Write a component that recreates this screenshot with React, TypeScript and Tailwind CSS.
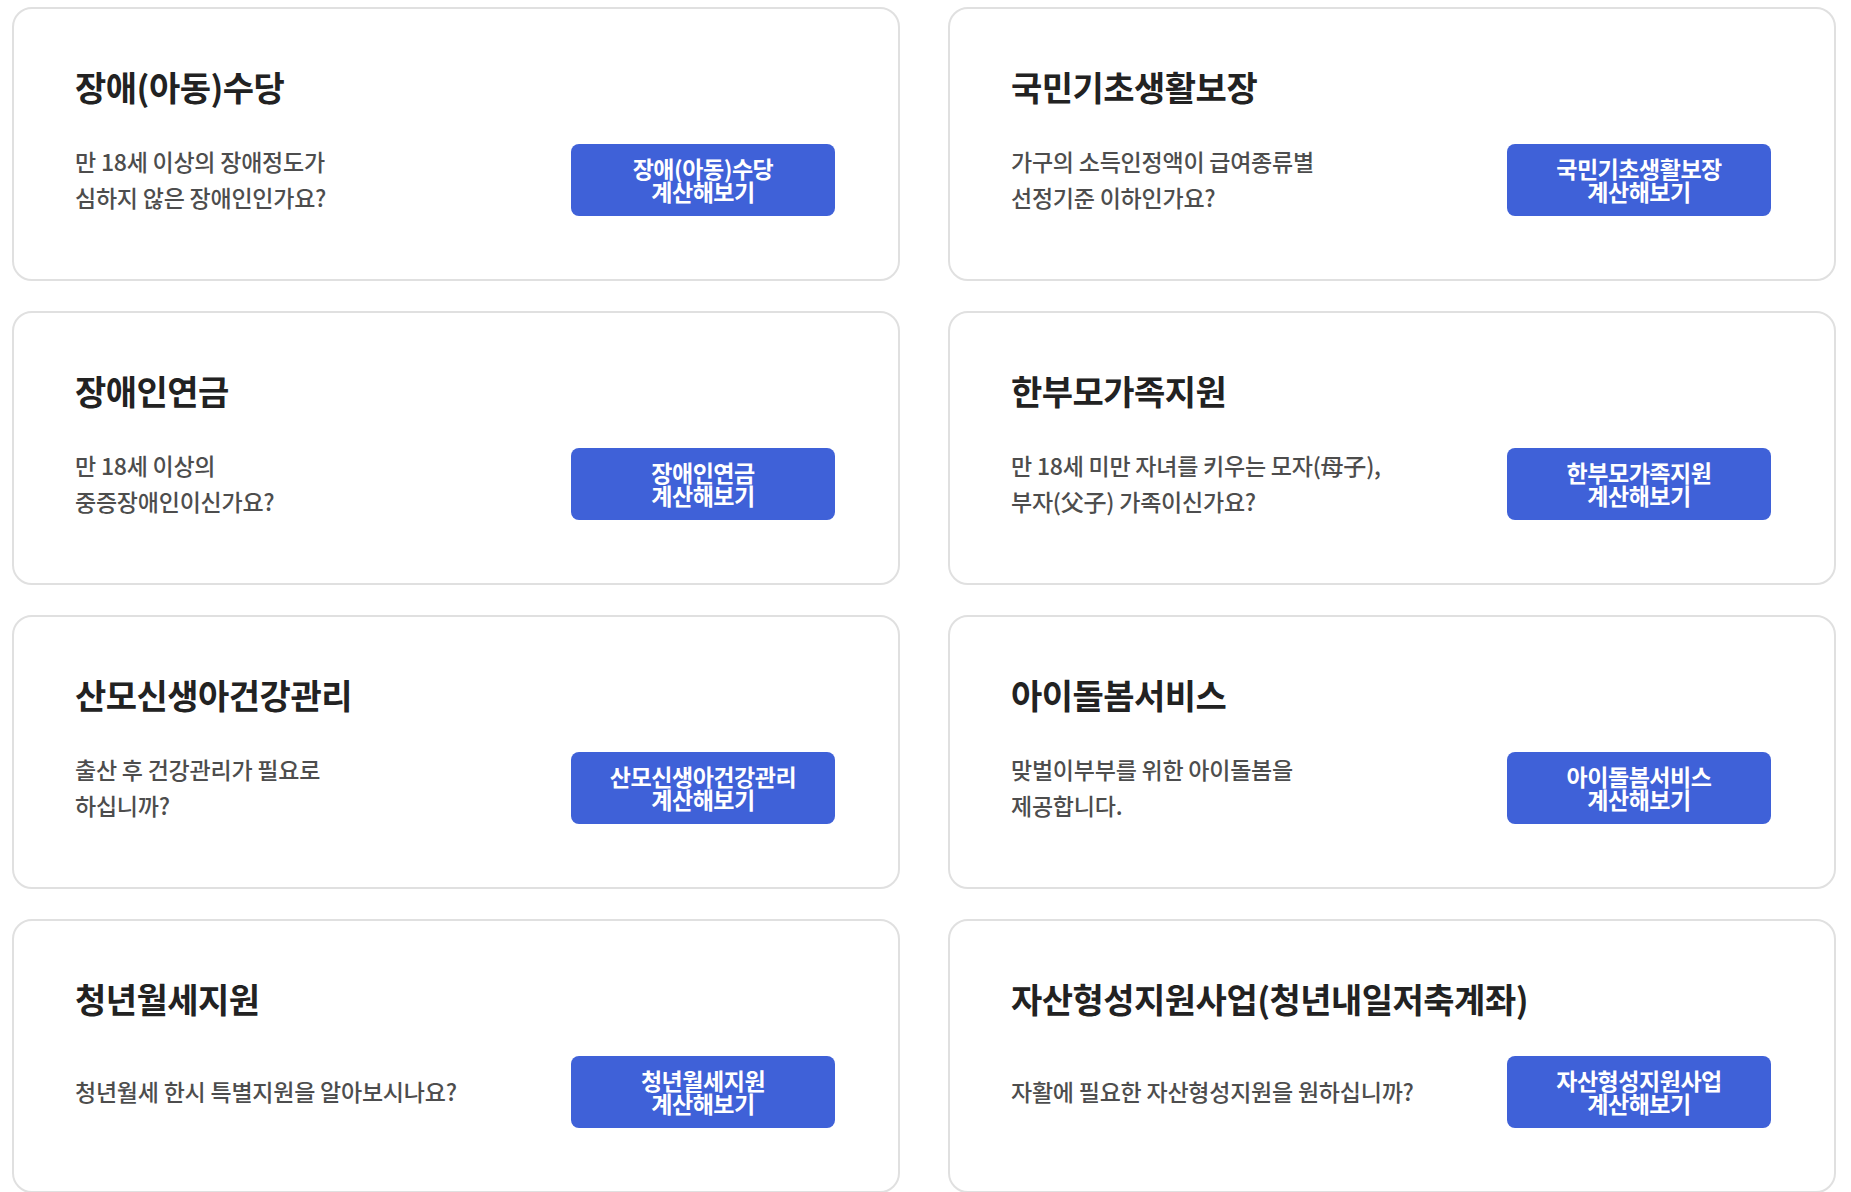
const cards = [
  {
    title: '장애(아동)수당',
    desc: ['만 18세 이상의 장애정도가', '심하지 않은 장애인인가요?'],
    button: '장애(아동)수당',
  },
  {
    title: '국민기초생활보장',
    desc: ['가구의 소득인정액이 급여종류별', '선정기준 이하인가요?'],
    button: '국민기초생활보장',
  },
  {
    title: '장애인연금',
    desc: ['만 18세 이상의', '중증장애인이신가요?'],
    button: '장애인연금',
  },
  {
    title: '한부모가족지원',
    desc: ['만 18세 미만 자녀를 키우는 모자(母子),', '부자(父子) 가족이신가요?'],
    button: '한부모가족지원',
  },
  {
    title: '산모신생아건강관리',
    desc: ['출산 후 건강관리가 필요로', '하십니까?'],
    button: '산모신생아건강관리',
  },
  {
    title: '아이돌봄서비스',
    desc: ['맞벌이부부를 위한 아이돌봄을', '제공합니다.'],
    button: '아이돌봄서비스',
  },
  {
    title: '청년월세지원',
    desc: ['청년월세 한시 특별지원을 알아보시나요?'],
    button: '청년월세지원',
  },
  {
    title: '자산형성지원사업(청년내일저축계좌)',
    desc: ['자활에 필요한 자산형성지원을 원하십니까?'],
    button: '자산형성지원사업',
  },
];

type Card = (typeof cards)[number];

function BenefitCard({ card }: { card: Card }) {
  return (
    <div className="h-[274px] rounded-[20px] border-2 border-[#e0e0e0] bg-white pl-[61px] pr-[63px] pt-[57px]">
      <h2 className="text-[34px] leading-[42px] font-semibold tracking-[-0.015em] text-[#222222]">
        {card.title}
      </h2>
      <div className="mt-[36px] flex items-center justify-between">
        <p className="-mt-[3px] text-[23px] leading-[36px] font-medium tracking-[-0.01em] text-[#4d4d4d]">
          {card.desc.map((line, i) => (
            <span key={i} className="block">
              {line}
            </span>
          ))}
        </p>
        <button className="flex h-[72px] w-[264px] shrink-0 flex-col items-center justify-center rounded-[8px] bg-[#3f61d8] text-[23px] leading-[23px] font-bold tracking-[-0.02em] text-white">
          <span>{card.button}</span>
          <span>계산해보기</span>
        </button>
      </div>
    </div>
  );
}

export default function App() {
  return (
    <div
      className="min-h-screen bg-white pl-[12px] pt-[7px] pb-[20px]"
      style={{ fontFamily: '"Noto Sans CJK KR", "Noto Sans", sans-serif' }}
    >
      <div className="grid grid-cols-[888px_888px] gap-x-[48px] gap-y-[30px]">
        {cards.map((c) => (
          <BenefitCard key={c.title} card={c} />
        ))}
      </div>
    </div>
  );
}
